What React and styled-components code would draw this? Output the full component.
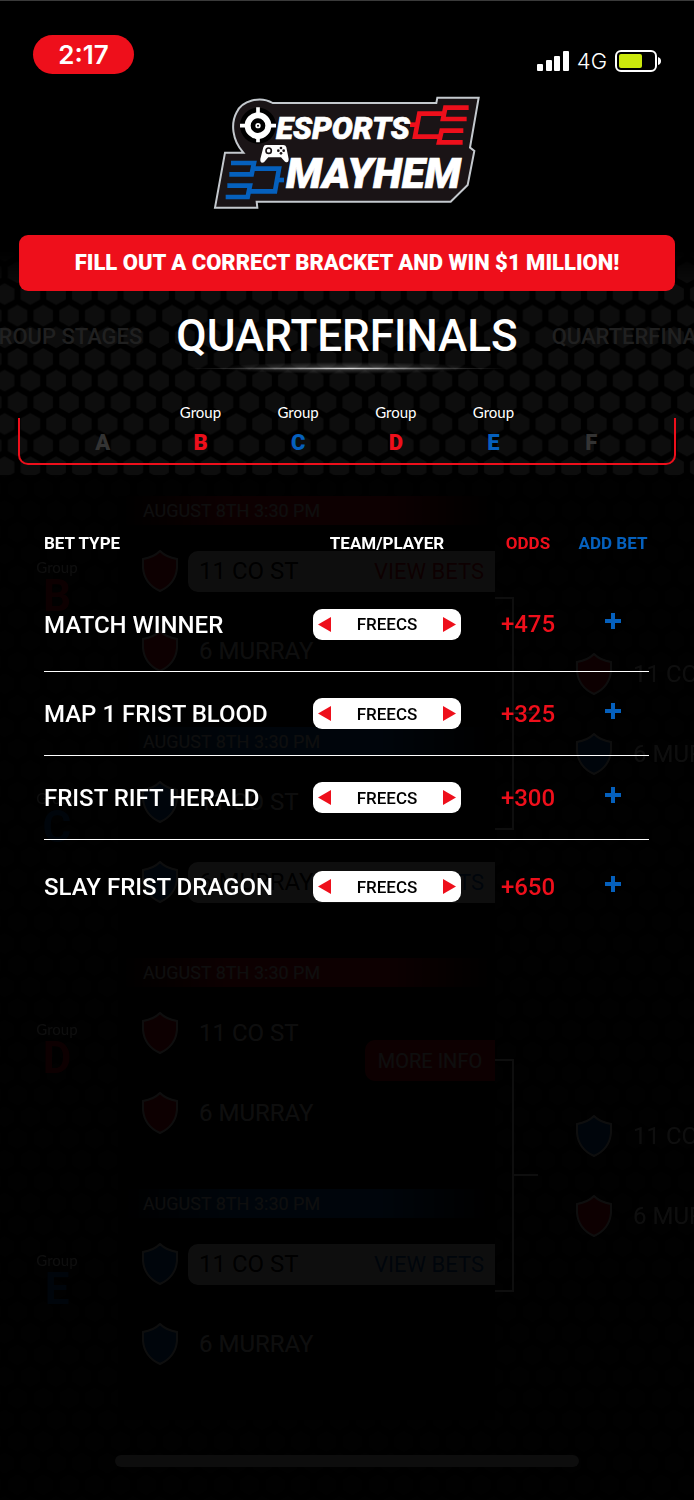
import React, { useState } from "react";
import styled, { createGlobalStyle } from "styled-components";

const RED = "#ee0f1b";
const BLUE = "#0560bd";

const GlobalStyle = createGlobalStyle`
  * { box-sizing: border-box; }
  body {
    margin: 0;
    background: #000000;
    color: #ffffff;
    font-family: Roboto, "Liberation Sans", sans-serif;
  }
  button {
    font-family: inherit;
    border: none;
    background: none;
    padding: 0;
    cursor: pointer;
  }
`;

const Page = styled.div`
  position: relative;
  display: flex;
  flex-direction: column;
  min-height: 100vh;
  overflow: hidden;
  border-top: 1px solid #3a3a3a;
`;

const Backdrop = styled.svg`
  position: absolute;
  top: 240px;
  left: 0;
  width: 100%;
  height: calc(100% - 240px);
  mask-image: linear-gradient(transparent 10px, #000000 50px);
`;

const Header = styled.header`
  position: relative;
  display: flex;
  flex-direction: column;
  align-items: center;
  padding-top: 34px;
`;

const StatusBar = styled.div`
  display: flex;
  justify-content: space-between;
  align-items: flex-end;
  width: 100%;
  padding: 0 33px;
`;

const Clock = styled.time`
  width: 101px;
  border-radius: 20px;
  background: ${RED};
  text-align: center;
  font-family: Inter, sans-serif;
  font-size: 26px;
  font-weight: 600;
  line-height: 39px;
`;

const Signals = styled.div`
  display: flex;
  align-items: center;
  gap: 8px;
  padding-bottom: 2px;
  font-family: Inter, sans-serif;
  font-size: 22px;
  font-weight: 300;
  line-height: 22px;
`;

const LogoArt = styled.svg`
  width: 300px;
  height: 135px;
  margin-top: 11px;
  font-family: Roboto, sans-serif;
  font-style: italic;
  font-weight: 900;
`;

const Banner = styled.a`
  position: relative;
  margin: 15px 19px 0;
  padding: 16px;
  border-radius: 9px;
  background: ${RED};
  color: #ffffff;
  font-size: 22px;
  font-weight: 900;
  line-height: 24px;
  text-align: center;
  text-decoration: none;
  white-space: nowrap;
`;

const Stages = styled.nav`
  position: relative;
  display: grid;
  grid-template-columns: minmax(0, 1fr) auto minmax(0, 1fr);
  align-items: center;
  gap: 34px;
  margin-top: 19px;
`;

const StageLink = styled.a`
  display: flex;
  justify-content: ${({ $side }) => ($side === "left" ? "flex-end" : "flex-start")};
  overflow: hidden;
  color: #202020;
  font-size: 22px;
  font-weight: 500;
  text-decoration: none;
  white-space: nowrap;
`;

const Title = styled.h1`
  margin: 0;
  font-size: 44px;
  font-weight: 500;
  line-height: 52px;
`;

const Glow = styled.div`
  position: relative;
  align-self: center;
  width: 320px;
  height: 12px;
  background:
    radial-gradient(closest-side, rgba(255, 255, 255, 0.8), rgba(255, 255, 255, 0.2) 60%, rgba(255, 255, 255, 0)) center / 100% 3px no-repeat,
    radial-gradient(closest-side, rgba(255, 255, 255, 0.25), rgba(255, 255, 255, 0)) center / 80% 100% no-repeat;
`;

const Groups = styled.div`
  position: relative;
  display: grid;
  grid-template-columns: repeat(6, 1fr);
  margin: 28px 18px 0;
  padding: 0 36px 8px;

  &::before {
    content: "";
    position: absolute;
    inset: 16px 0 0;
    border: 2px solid ${RED};
    border-top: none;
    border-radius: 0 0 10px 10px;
  }
`;

const GroupTab = styled.button`
  position: relative;
  display: flex;
  flex-direction: column;
  justify-content: flex-end;
  align-items: center;
  gap: 7px;
  color: ${({ $color }) => $color};
  font-size: 22px;
  font-weight: 900;
  line-height: 28px;
`;

const GroupLabel = styled.span`
  color: #ffffff;
  font-family: Lato, sans-serif;
  font-size: 15px;
  font-weight: 400;
  line-height: 20px;
`;

/* the bracket and the bets share one grid cell, the bets lie on top */
const Arena = styled.main`
  position: relative;
  display: grid;
  flex: 1;
  margin-top: 10px;
  background: rgba(0, 0, 0, 0.9);

  > * {
    grid-area: 1 / 1;
    min-width: 0;
  }
`;

const Bracket = styled.div`
  padding: 21px 0 80px;
  opacity: 0.055;
  overflow: hidden;
`;

const Half = styled.section`
  display: grid;
  grid-template-columns: minmax(0, 1fr) 43px 156px;
`;

const Match = styled.div`
  display: grid;
  grid-template-columns: 118px minmax(0, 1fr);
  height: 231px;
`;

const MatchGroup = styled.div`
  display: flex;
  flex-direction: column;
  align-items: center;
  padding: 61px 4px 0 0;
  color: ${({ $color }) => $color};
  font-size: 44px;
  font-weight: 700;
  line-height: 38px;
`;

const MatchCard = styled.div`
  position: relative;
  background: #000000;
`;

const MatchDate = styled.div`
  height: 29px;
  margin-bottom: 6px;
  padding-left: 25px;
  background: linear-gradient(to right, transparent, ${({ $color }) => $color} 30%, ${({ $color }) => $color} 70%, transparent);
  font-size: 18px;
  line-height: 30px;
`;

const TeamRow = styled.div`
  display: flex;
  align-items: center;
  gap: 10px;
  height: 80px;
  padding-left: 24px;
`;

const TeamName = styled.div`
  display: flex;
  flex: 1;
  justify-content: space-between;
  align-items: center;
  height: 41px;
  padding: 0 11px;
  border-radius: 10px 0 0 10px;
  background: ${({ $open }) => ($open ? "#ffffff" : "none")};
  color: ${({ $open }) => ($open ? "#000000" : "#ffffff")};
  font-size: 24px;
  white-space: nowrap;
`;

const ViewBets = styled.button`
  color: ${({ $color }) => $color};
  font-size: 22px;
`;

const MoreInfo = styled.button`
  position: absolute;
  top: 82px;
  right: 0;
  width: 130px;
  height: 41px;
  border-radius: 10px 0 0 10px;
  background: ${RED};
  color: #ffffff;
  font-size: 20px;
`;

const ShieldIcon = styled.svg`
  flex-shrink: 0;
`;

const Connector = styled.div`
  display: grid;
  grid-template-columns: 19px 24px;
  height: 233px;
  margin-top: 101px;
`;

const Fork = styled.div`
  border: 2px solid #ffffff;
  border-left: none;
`;

const Stem = styled.div`
  height: 117px;
  border-bottom: 2px solid #ffffff;
`;

const Semi = styled.div`
  display: flex;
  flex-direction: column;
  justify-content: center;
  height: 231px;
  margin-top: 102px;
  padding-left: 14px;
`;

const Bets = styled.div`
  position: relative;
  padding: 53px 45px 0 44px;
`;

const BetTable = styled.table`
  width: 100%;
  border-collapse: collapse;
  table-layout: fixed;
  white-space: nowrap;
`;

const HeadCell = styled.th`
  width: ${({ $width }) => $width || "auto"};
  height: 49px;
  padding: 0;
  color: ${({ $color }) => $color || "#ffffff"};
  font-size: 17px;
  font-weight: 700;
  line-height: 30px;
  text-align: ${({ $align }) => $align || "center"};
  vertical-align: top;
`;

const BetRow = styled.tr`
  height: 84px;
  border-bottom: 1px solid #ffffff;

  &:first-child { height: 94px; }
  &:last-child { height: 94px; border-bottom: none; }
`;

const BetName = styled.td`
  padding: 2px 0 0;
  font-size: 24px;
  font-weight: 500;
`;

const BetCell = styled.td`
  padding: 1px 0 0;
  color: ${RED};
  font-size: 24px;
  font-weight: 500;
  text-align: center;
`;

const Picker = styled.div`
  display: flex;
  justify-content: space-between;
  align-items: center;
  width: 148px;
  height: 31px;
  margin: 0 auto;
  padding: 0 5px;
  border-radius: 9px;
  background: #ffffff;
  color: #000000;
  font-size: 17px;
`;

const ArrowButton = styled.button`
  display: flex;
`;

const AddButton = styled.button`
  display: block;
  margin: 0 auto 6px;
  line-height: 0;
`;

const HomeBar = styled.div`
  position: relative;
  align-self: end;
  justify-self: center;
  width: 67%;
  height: 12px;
  margin-bottom: 33px;
  border-radius: 6px;
  background: #0d0d0d;
`;

const Shield = ({ color }) => (
  <ShieldIcon width="36" height="42" viewBox="0 0 36 42">
    <path
      d="M18 1C13 6 7 8 1 9V18C2 29 9 37 18 41C27 37 34 29 35 18V9C29 8 23 6 18 1Z"
      fill={color}
      stroke="#ffffff"
      strokeWidth="2"
    />
  </ShieldIcon>
);

const Logo = () => (
  <LogoArt viewBox="-9 0 900 405" role="img" aria-label="Esports Mayhem">
    <path
      d="M218 54H709L712 38H836L810 188L823 198L803 300L752 350H170L172 368H45L75 203H130C96 165 92 115 110 82C126 47 180 32 218 54Z"
      fill="#1a1416"
      stroke="#c4c9ce"
      strokeWidth="6"
    />
    <circle cx="174" cy="122" r="54" fill="#000000" />
    <circle cx="174" cy="122" r="31" fill="none" stroke="#ffffff" strokeWidth="18" />
    <path d="M174 67V90M174 154V172M120 122H142M206 122H228" stroke="#ffffff" strokeWidth="11" />
    <circle cx="174" cy="122" r="8" fill="#ffffff" />
    <circle cx="174" cy="122" r="3" fill="#000000" />
    <g fill="none" stroke={RED} strokeWidth="14">
      <path d="M806 68H736L729 102H800" />
      <path d="M790 137H725L717 172H788" />
      <path d="M732 86H658L645 155H722" />
      <path d="M630 119H652" />
    </g>
    <g fill="none" stroke={BLUE} strokeWidth="14">
      <path d="M93 234H162L155 268H88" />
      <path d="M82 302H150L143 336H77" />
      <path d="M160 251H237L225 319H148" />
      <path d="M232 285H252" />
    </g>
    <path
      d="M198 180H250Q257 180 259 187L266 222Q266 236 255 230L243 217H205L192 232Q180 237 181 222L190 187Q192 180 198 180Z"
      fill="#ffffff"
    />
    <circle cx="206" cy="197" r="8" fill="none" stroke="#1a1416" strokeWidth="5" />
    <g fill="#1a1416">
      <circle cx="243" cy="189" r="4" />
      <circle cx="243" cy="205" r="4" />
      <circle cx="235" cy="197" r="4" />
      <circle cx="251" cy="197" r="4" />
    </g>
    <text x="228" y="161" fontSize="94" fill="#ffffff" stroke="#ffffff" strokeWidth="2">ESPORTS</text>
    <text x="258" y="309" fontSize="127" fill="#ffffff" stroke="#ffffff" strokeWidth="2">MAYHEM</text>
  </LogoArt>
);

const HexBackdrop = () => (
  <Backdrop aria-hidden="true">
    <defs>
      <pattern id="hex" width="25.75" height="43.3" patternUnits="userSpaceOnUse" patternTransform="translate(4.6 9.5)">
        <g fill="#0d0d0d">
          <path d="M12.9 11L22.6 16.4V27.2L12.9 32.6L3.2 27.2V16.4Z" />
          <path d="M0 -10.6L9.7 -5.2V5.6L0 11L-9.7 5.6V-5.2Z" />
          <path d="M25.75 -10.6L35.45 -5.2V5.6L25.75 11L16.05 5.6V-5.2Z" />
          <path d="M0 32.7L9.7 38.1V48.9L0 54.3L-9.7 48.9V38.1Z" />
          <path d="M25.75 32.7L35.45 38.1V48.9L25.75 54.3L16.05 48.9V38.1Z" />
        </g>
      </pattern>
    </defs>
    <rect width="100%" height="100%" fill="url(#hex)" />
  </Backdrop>
);

const groups = [
  { name: "A", color: "#333333" },
  { name: "B", color: RED, active: true },
  { name: "C", color: BLUE, active: true },
  { name: "D", color: RED, active: true },
  { name: "E", color: BLUE, active: true },
  { name: "F", color: "#333333" }
];

const halves = [
  {
    matches: [
      { group: "B", color: RED, open: 0 },
      { group: "C", color: BLUE, open: 1 }
    ],
    semi: [RED, BLUE]
  },
  {
    matches: [
      { group: "D", color: RED, info: true },
      { group: "E", color: BLUE, open: 0 }
    ],
    semi: [BLUE, RED]
  }
];

const matchTeams = ["11 CO ST", "6 MURRAY"];

const bets = [
  { name: "MATCH WINNER", odds: "+475" },
  { name: "MAP 1 FRIST BLOOD", odds: "+325" },
  { name: "FRIST RIFT HERALD", odds: "+300" },
  { name: "SLAY FRIST DRAGON", odds: "+650" }
];

const players = ["FREECS"];

const PlayerPicker = () => {
  const [index, setIndex] = useState(0);
  const move = (step) => setIndex((index + step + players.length) % players.length);

  return (
    <Picker>
      <ArrowButton type="button" aria-label="Previous" onClick={() => move(-1)}>
        <svg width="13" height="15" viewBox="0 0 13 15">
          <path d="M13 0V15L0 7.5Z" fill={RED} />
        </svg>
      </ArrowButton>
      {players[index]}
      <ArrowButton type="button" aria-label="Next" onClick={() => move(1)}>
        <svg width="13" height="15" viewBox="0 0 13 15">
          <path d="M0 0V15L13 7.5Z" fill={RED} />
        </svg>
      </ArrowButton>
    </Picker>
  );
};

const App = () => (
  <Page>
    <GlobalStyle />
    <HexBackdrop />
    <Header>
      <StatusBar>
        <Clock>2:17</Clock>
        <Signals>
          <svg width="32" height="21" viewBox="0 0 32 21" fill="#ffffff">
            <rect x="0" y="13" width="6" height="7" rx="1" />
            <rect x="9" y="9" width="6" height="11" rx="1" />
            <rect x="17" y="5" width="6" height="15" rx="1" />
            <rect x="26" y="0" width="6" height="20" rx="1" />
          </svg>
          4G
          <svg width="46" height="22" viewBox="0 0 46 22">
            <rect x="1" y="1" width="40" height="20" rx="5" fill="none" stroke="#ffffff" strokeWidth="2" />
            <rect x="4" y="4" width="23" height="14" rx="2" fill="#cbe80c" />
            <path d="M43 7Q46 8 46 11Q46 14 43 15Z" fill="#ffffff" />
          </svg>
        </Signals>
      </StatusBar>
      <Logo />
    </Header>

    <Banner href="#bracket">FILL OUT A CORRECT BRACKET AND WIN $1 MILLION!</Banner>

    <Stages>
      <StageLink href="#groups" $side="left">GROUP STAGES</StageLink>
      <Title>QUARTERFINALS</Title>
      <StageLink href="#quarterfinals" $side="right">QUARTERFINALS</StageLink>
    </Stages>
    <Glow />

    <Groups>
      {groups.map(group => (
        <GroupTab key={group.name} type="button" $color={group.color}>
          {group.active && <GroupLabel>Group</GroupLabel>}
          {group.name}
        </GroupTab>
      ))}
    </Groups>

    <Arena>
      <Bracket id="bracket">
        {halves.map((half, idx) => (
          <Half key={idx}>
            <div>
              {half.matches.map(match => (
                <Match key={match.group}>
                  <MatchGroup $color={match.color}>
                    <GroupLabel>Group</GroupLabel>
                    {match.group}
                  </MatchGroup>
                  <MatchCard>
                    <MatchDate $color={match.color}>AUGUST 8TH 3:30 PM</MatchDate>
                    {matchTeams.map((team, i) => (
                      <TeamRow key={team}>
                        <Shield color={match.color} />
                        <TeamName $open={match.open === i}>
                          {team}
                          {match.open === i && (
                            <ViewBets type="button" $color={match.color}>VIEW BETS</ViewBets>
                          )}
                        </TeamName>
                      </TeamRow>
                    ))}
                    {match.info && <MoreInfo type="button">MORE INFO</MoreInfo>}
                  </MatchCard>
                </Match>
              ))}
            </div>
            <Connector>
              <Fork />
              <Stem />
            </Connector>
            <Semi>
              {matchTeams.map((team, i) => (
                <TeamRow key={team}>
                  <Shield color={half.semi[i]} />
                  <TeamName>{team}</TeamName>
                </TeamRow>
              ))}
            </Semi>
          </Half>
        ))}
      </Bracket>

      <Bets>
        <BetTable>
          <thead>
            <tr>
              <HeadCell $align="left">BET TYPE</HeadCell>
              <HeadCell $width="184px">TEAM/PLAYER</HeadCell>
              <HeadCell $width="98px" $color={RED}>ODDS</HeadCell>
              <HeadCell $width="72px" $color={BLUE}>ADD BET</HeadCell>
            </tr>
          </thead>
          <tbody>
            {bets.map(bet => (
              <BetRow key={bet.name}>
                <BetName>{bet.name}</BetName>
                <BetCell><PlayerPicker /></BetCell>
                <BetCell>{bet.odds}</BetCell>
                <BetCell>
                  <AddButton type="button" aria-label={`Add ${bet.name}`}>
                    <svg width="16" height="16" viewBox="0 0 16 16">
                      <path d="M8 0V16M0 8H16" stroke={BLUE} strokeWidth="4" />
                    </svg>
                  </AddButton>
                </BetCell>
              </BetRow>
            ))}
          </tbody>
        </BetTable>
      </Bets>
      <HomeBar />
    </Arena>
  </Page>
);

export default App;
